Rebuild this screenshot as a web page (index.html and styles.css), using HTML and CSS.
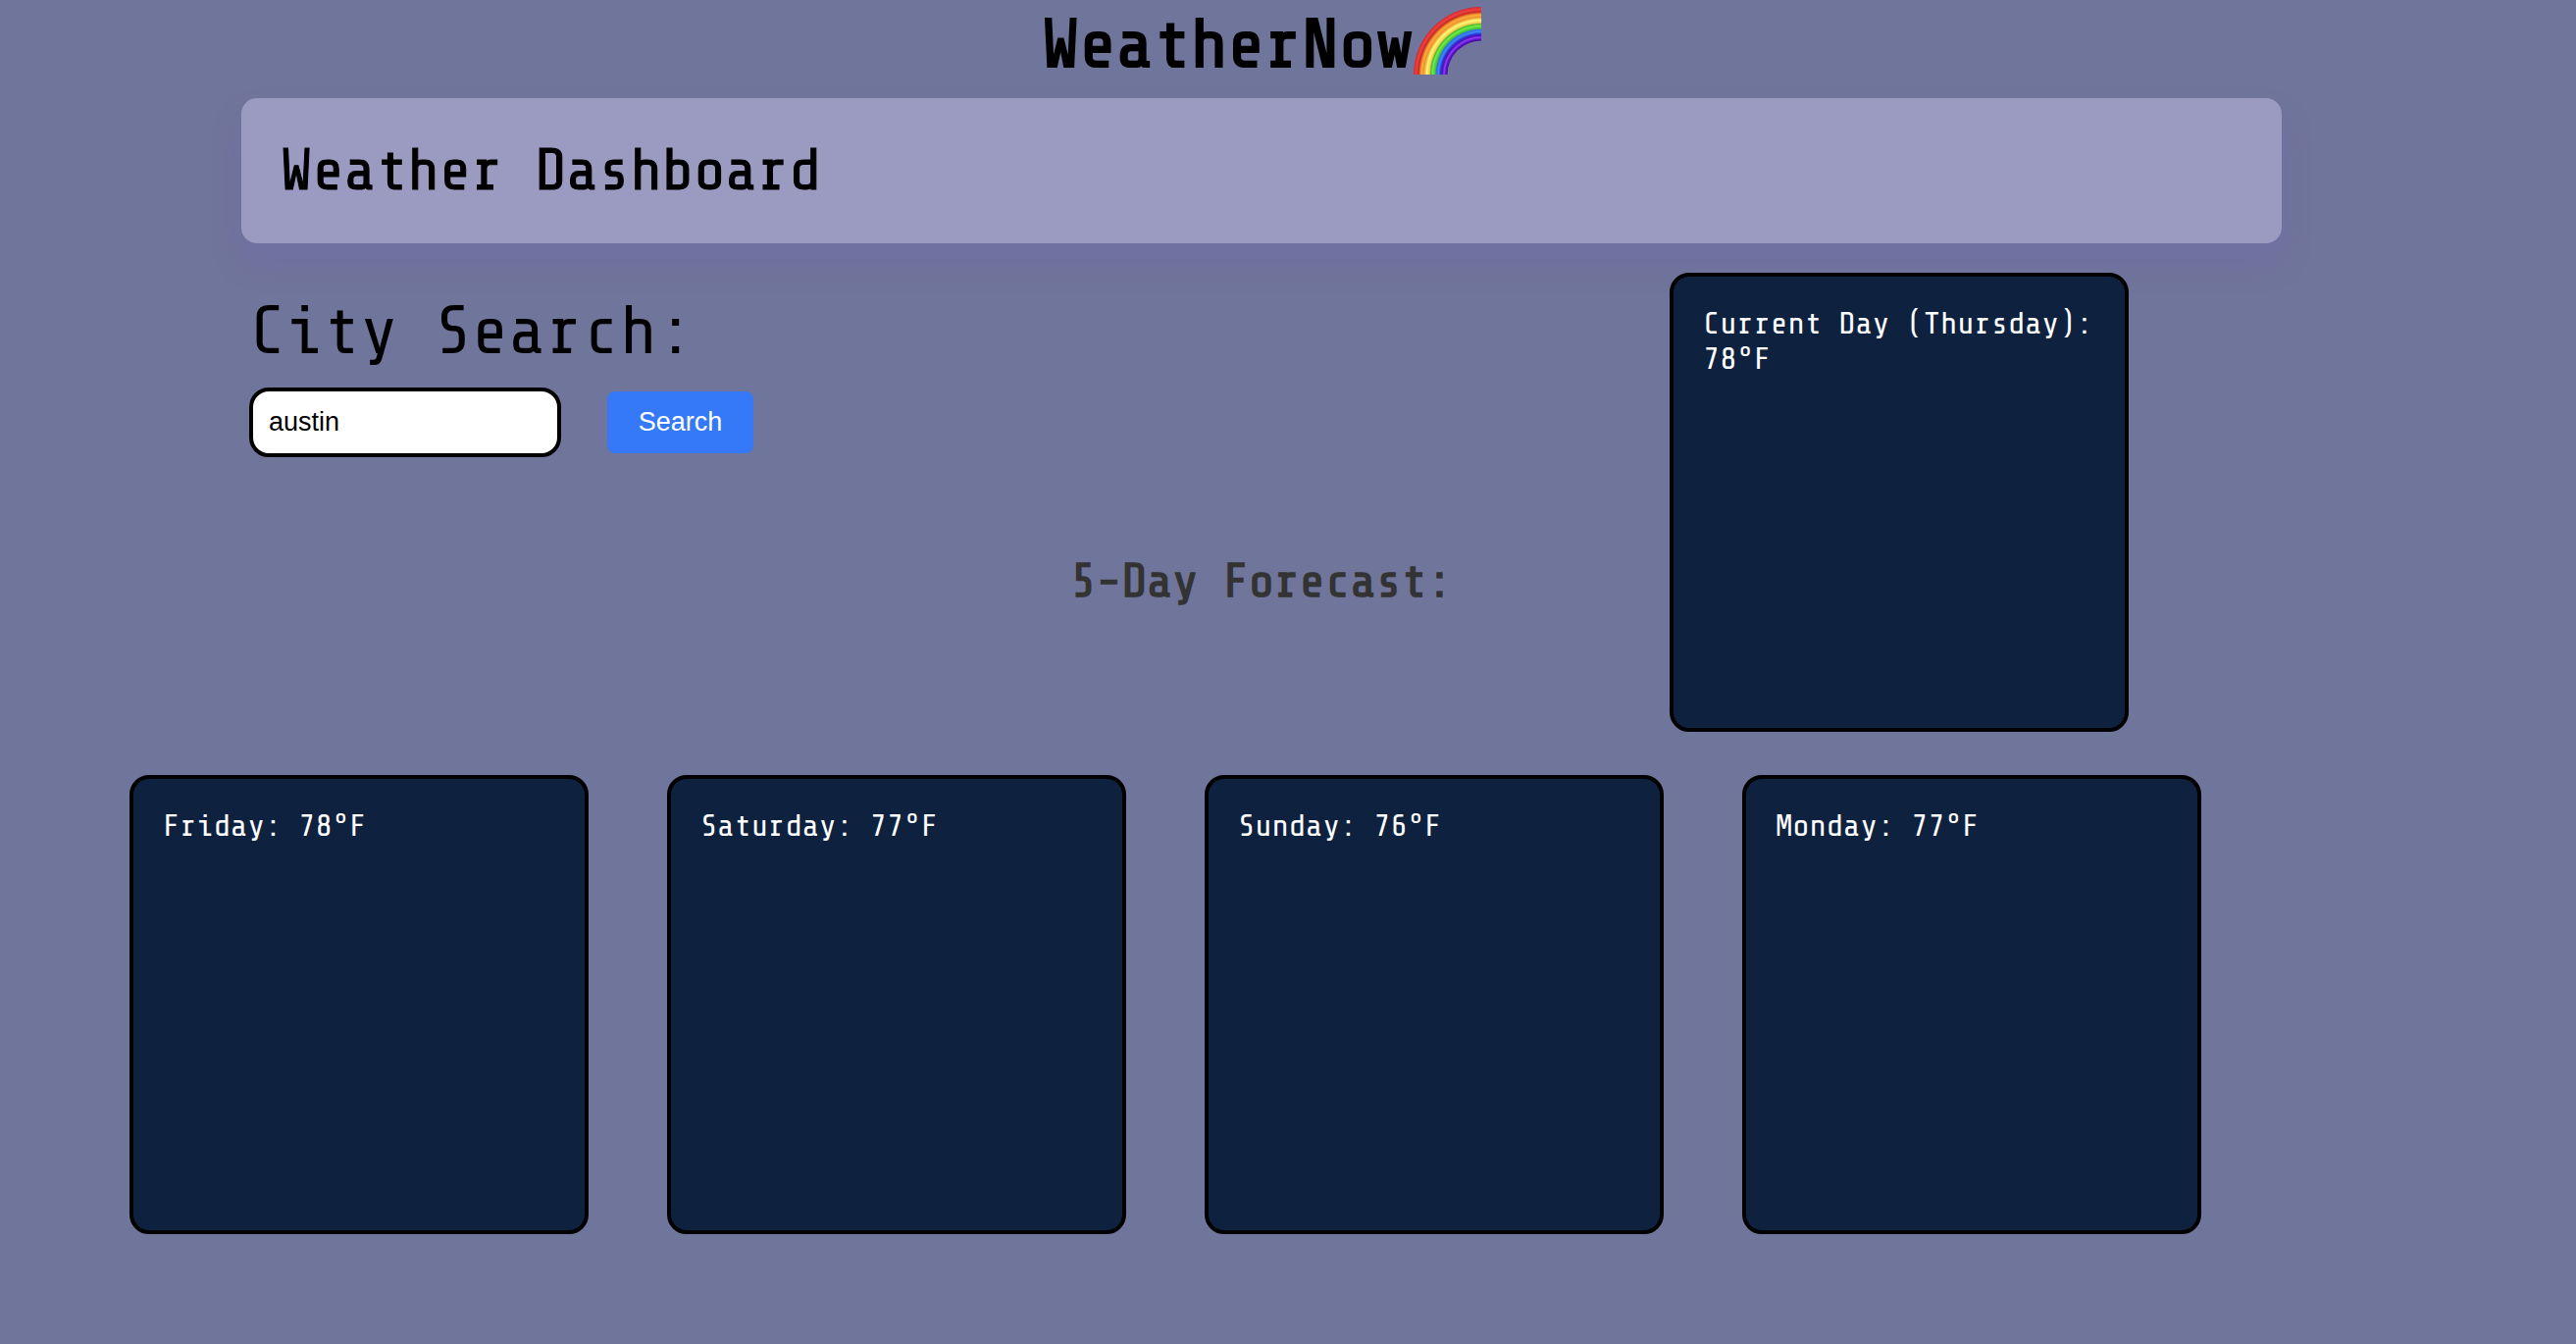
FILE: index.html
```html
<!DOCTYPE html>
<html lang="en">
<head>
  <meta charset="utf-8">
  <meta name="viewport" content="width=device-width, initial-scale=1">
  <title>WeatherNow</title>
  <link rel="stylesheet" href="styles.css">
</head>
<body>
  <div class="app">
    <header>
      <h1 class="brand">WeatherNow<svg class="brand-icon" viewBox="0 0 69 69" aria-hidden="true">
        <defs>
          <radialGradient id="arc" gradientUnits="userSpaceOnUse" cx="69" cy="69" r="69">
            <stop offset="0.50" stop-color="#4a0a9e"/>
            <stop offset="0.525" stop-color="#5c12c8"/>
            <stop offset="0.55" stop-color="#9040f5"/>
            <stop offset="0.575" stop-color="#4c10c0"/>
            <stop offset="0.60" stop-color="#2c30d0"/>
            <stop offset="0.63" stop-color="#3c86f5"/>
            <stop offset="0.665" stop-color="#2e72ea"/>
            <stop offset="0.68" stop-color="#46c030"/>
            <stop offset="0.72" stop-color="#6cf048"/>
            <stop offset="0.745" stop-color="#50b830"/>
            <stop offset="0.765" stop-color="#f0cc48"/>
            <stop offset="0.805" stop-color="#fff87a"/>
            <stop offset="0.83" stop-color="#f2c044"/>
            <stop offset="0.85" stop-color="#ee8f30"/>
            <stop offset="0.88" stop-color="#f8b03c"/>
            <stop offset="0.905" stop-color="#e87428"/>
            <stop offset="0.925" stop-color="#c62a24"/>
            <stop offset="0.96" stop-color="#f04040"/>
            <stop offset="1" stop-color="#cf2a30"/>
          </radialGradient>
        </defs>
        <path d="M0 69A69 69 0 0 1 69 0V34.500A34.500 34.500 0 0 0 34.500 69Z" fill="url(#arc)"/>
      </svg></h1>
    </header>

    <section class="banner">
      <h2 class="banner-title">Weather Dashboard</h2>
    </section>

    <main>
      <section class="overview">
        <form class="search">
          <label class="search-label" for="city">City Search:</label>
          <div class="search-row">
            <input class="search-input" id="city" type="text" value="austin">
            <button class="search-button" type="button">Search</button>
          </div>
        </form>
        <h2 class="forecast-title">5-Day Forecast:</h2>
        <article class="card card-current">Current Day (Thursday): 78°F</article>
      </section>

      <section class="forecast">
        <article class="card">Friday: 78°F</article>
        <article class="card">Saturday: 77°F</article>
        <article class="card">Sunday: 76°F</article>
        <article class="card">Monday: 77°F</article>
      </section>
    </main>
  </div>
</body>
</html>
```
FILE: styles.css
```css
* {
  box-sizing: border-box;
}

body {
  margin: 0;
  min-height: 100vh;
  background: #70759b;
  color: #000;
  font-family: "Share Tech Mono", "DejaVu Sans Mono", monospace;
}

.app {
  padding-right: 54px;
}

.brand {
  display: flex;
  justify-content: center;
  align-items: flex-start;
  margin: 0;
  font-size: 70px;
  line-height: 92px;
}

.brand-icon {
  width: 69px;
  height: 69px;
  margin-top: 7px;
}

.banner {
  margin: 8px 246px 30px;
  padding: 40px;
  border-radius: 16px;
  background: #9b9ac1;
  box-shadow: 0 20px 30px rgba(106, 100, 175, 0.28);
}

.banner-title {
  margin: 0;
  font-size: 60px;
  font-weight: 500;
  line-height: 68px;
  -webkit-text-stroke: 1px currentColor;
}

.overview {
  display: grid;
  grid-template-columns: 1fr auto 1fr;
  grid-template-rows: auto 1fr;
  margin: 0 246px 44px;
}

.search {
  padding: 20px 0 0 8px;
}

.search-label {
  display: block;
  margin-bottom: 17px;
  font-size: 70px;
  line-height: 80px;
}

.search-row {
  display: flex;
  align-items: center;
  gap: 47px;
}

.search-input {
  width: 318px;
  height: 71px;
  padding: 0 16px;
  border: 4px solid #000;
  border-radius: 20px;
  background: #fff;
  color: #000;
  font: 27px "Liberation Sans", Arial, sans-serif;
}

.search-button {
  width: 149px;
  height: 63px;
  padding: 0;
  border: 0;
  border-radius: 8px;
  background: #3579f8;
  color: #fff;
  font: 27px "Liberation Sans", Arial, sans-serif;
}

.forecast-title {
  grid-area: 2 / 2;
  margin: 99px 0 0;
  color: #333;
  font-size: 48px;
  line-height: 56px;
}

.card {
  width: 468px;
  min-height: 468px;
  padding: 30px;
  border: 4px solid #000;
  border-radius: 20px;
  background: #0e2240;
  color: #fff;
  font-size: 32px;
  line-height: 36px;
}

.card-current {
  grid-area: 1 / 3 / 3 / 4;
  justify-self: end;
  margin-right: 156px;
}

.forecast {
  display: flex;
  flex-wrap: wrap;
  gap: 44px 80px;
  padding: 0 0 112px 132px;
}
```
